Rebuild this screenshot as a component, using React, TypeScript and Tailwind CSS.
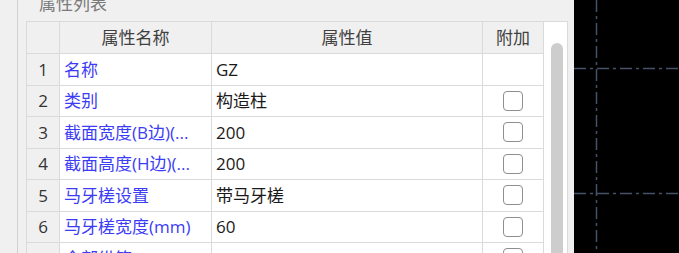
import React from 'react';

type Row = { name: string; value: string; check: boolean };

const rows: Row[] = [
  { name: '名称', value: 'GZ', check: false },
  { name: '类别', value: '构造柱', check: true },
  { name: '截面宽度(B边)(...', value: '200', check: true },
  { name: '截面高度(H边)(...', value: '200', check: true },
  { name: '马牙槎设置', value: '带马牙槎', check: true },
  { name: '马牙槎宽度(mm)', value: '60', check: true },
  { name: '全部纵筋', value: '4Φ12', check: true },
];

const cell = 'border-r border-b border-[#dadada] flex items-center h-[31.5px]';

const CheckBox = () => (
  <div className="w-[20px] h-[20px] rounded-[4px] border-[1.5px] border-[#8e8e8e] bg-white" />
);

export default function App() {
  return (
    <div className="w-[679px] h-[253px] overflow-hidden flex bg-[#f0f0f0] font-['Open_Sans','Noto_Sans_CJK_SC',sans-serif] text-[17px]">
      {/* left strip */}
      <div className="w-[18px] h-full border-r border-[#d0d0d0]" />

      {/* property panel */}
      <div className="w-[556px] h-full flex flex-col">
        <div className="h-[21px] shrink-0 overflow-hidden pl-[21px]">
          <div className="-mt-[5px] leading-[17px] text-[#7a7a7a]">属性列表</div>
        </div>

        <div className="flex flex-1 min-h-0 overflow-hidden pl-[8px]">
          <div className="w-[518px] shrink-0 border-l border-t border-[#dadada]">
            <div className="grid grid-cols-[33px_152px_271px_61px] text-[#404040]">
              <div className="border-r border-b border-[#dadada] h-[32px] bg-[#f0f0f0]" />
              <div className="border-r border-b border-[#dadada] h-[32px] bg-[#f0f0f0] flex items-center justify-center">属性名称</div>
              <div className="border-r border-b border-[#dadada] h-[32px] bg-[#f0f0f0] flex items-center justify-center">属性值</div>
              <div className="border-r border-b border-[#dadada] h-[32px] bg-[#f0f0f0] flex items-center justify-center">附加</div>
            </div>
            {rows.map((r, i) => (
              <div key={i} className="grid grid-cols-[33px_152px_271px_61px]">
                <div className={`${cell} justify-center bg-[#f0f0f0] text-[#333]`}>{i + 1}</div>
                <div className={`${cell} bg-white pl-[4px] text-[#3c3cf5] whitespace-nowrap`}>{r.name}</div>
                <div className={`${cell} bg-white pl-[4px] text-[#1a1a1a]`}>{r.value}</div>
                <div className={`${cell} bg-white justify-center`}>{r.check && <CheckBox />}</div>
              </div>
            ))}
          </div>

          {/* scrollbar */}
          <div className="w-[24px] shrink-0 bg-white border-t border-r border-[#dadada] pt-[21px] pl-[7px] pr-[4px]">
            <div className="w-[12px] h-full rounded-t-full bg-[#cdcdcd]" />
          </div>
        </div>
      </div>

      {/* CAD canvas */}
      <div className="flex-1 h-full bg-black relative">
        <svg className="absolute inset-0" width="105" height="253">
          <g stroke="#45536a" strokeWidth="1.5" strokeDasharray="12 4 3 4">
            <line x1="22.5" y1="0" x2="22.5" y2="253" />
            <line x1="0" y1="68.5" x2="105" y2="68.5" />
            <line x1="0" y1="193.5" x2="105" y2="193.5" />
          </g>
        </svg>
      </div>
    </div>
  );
}
